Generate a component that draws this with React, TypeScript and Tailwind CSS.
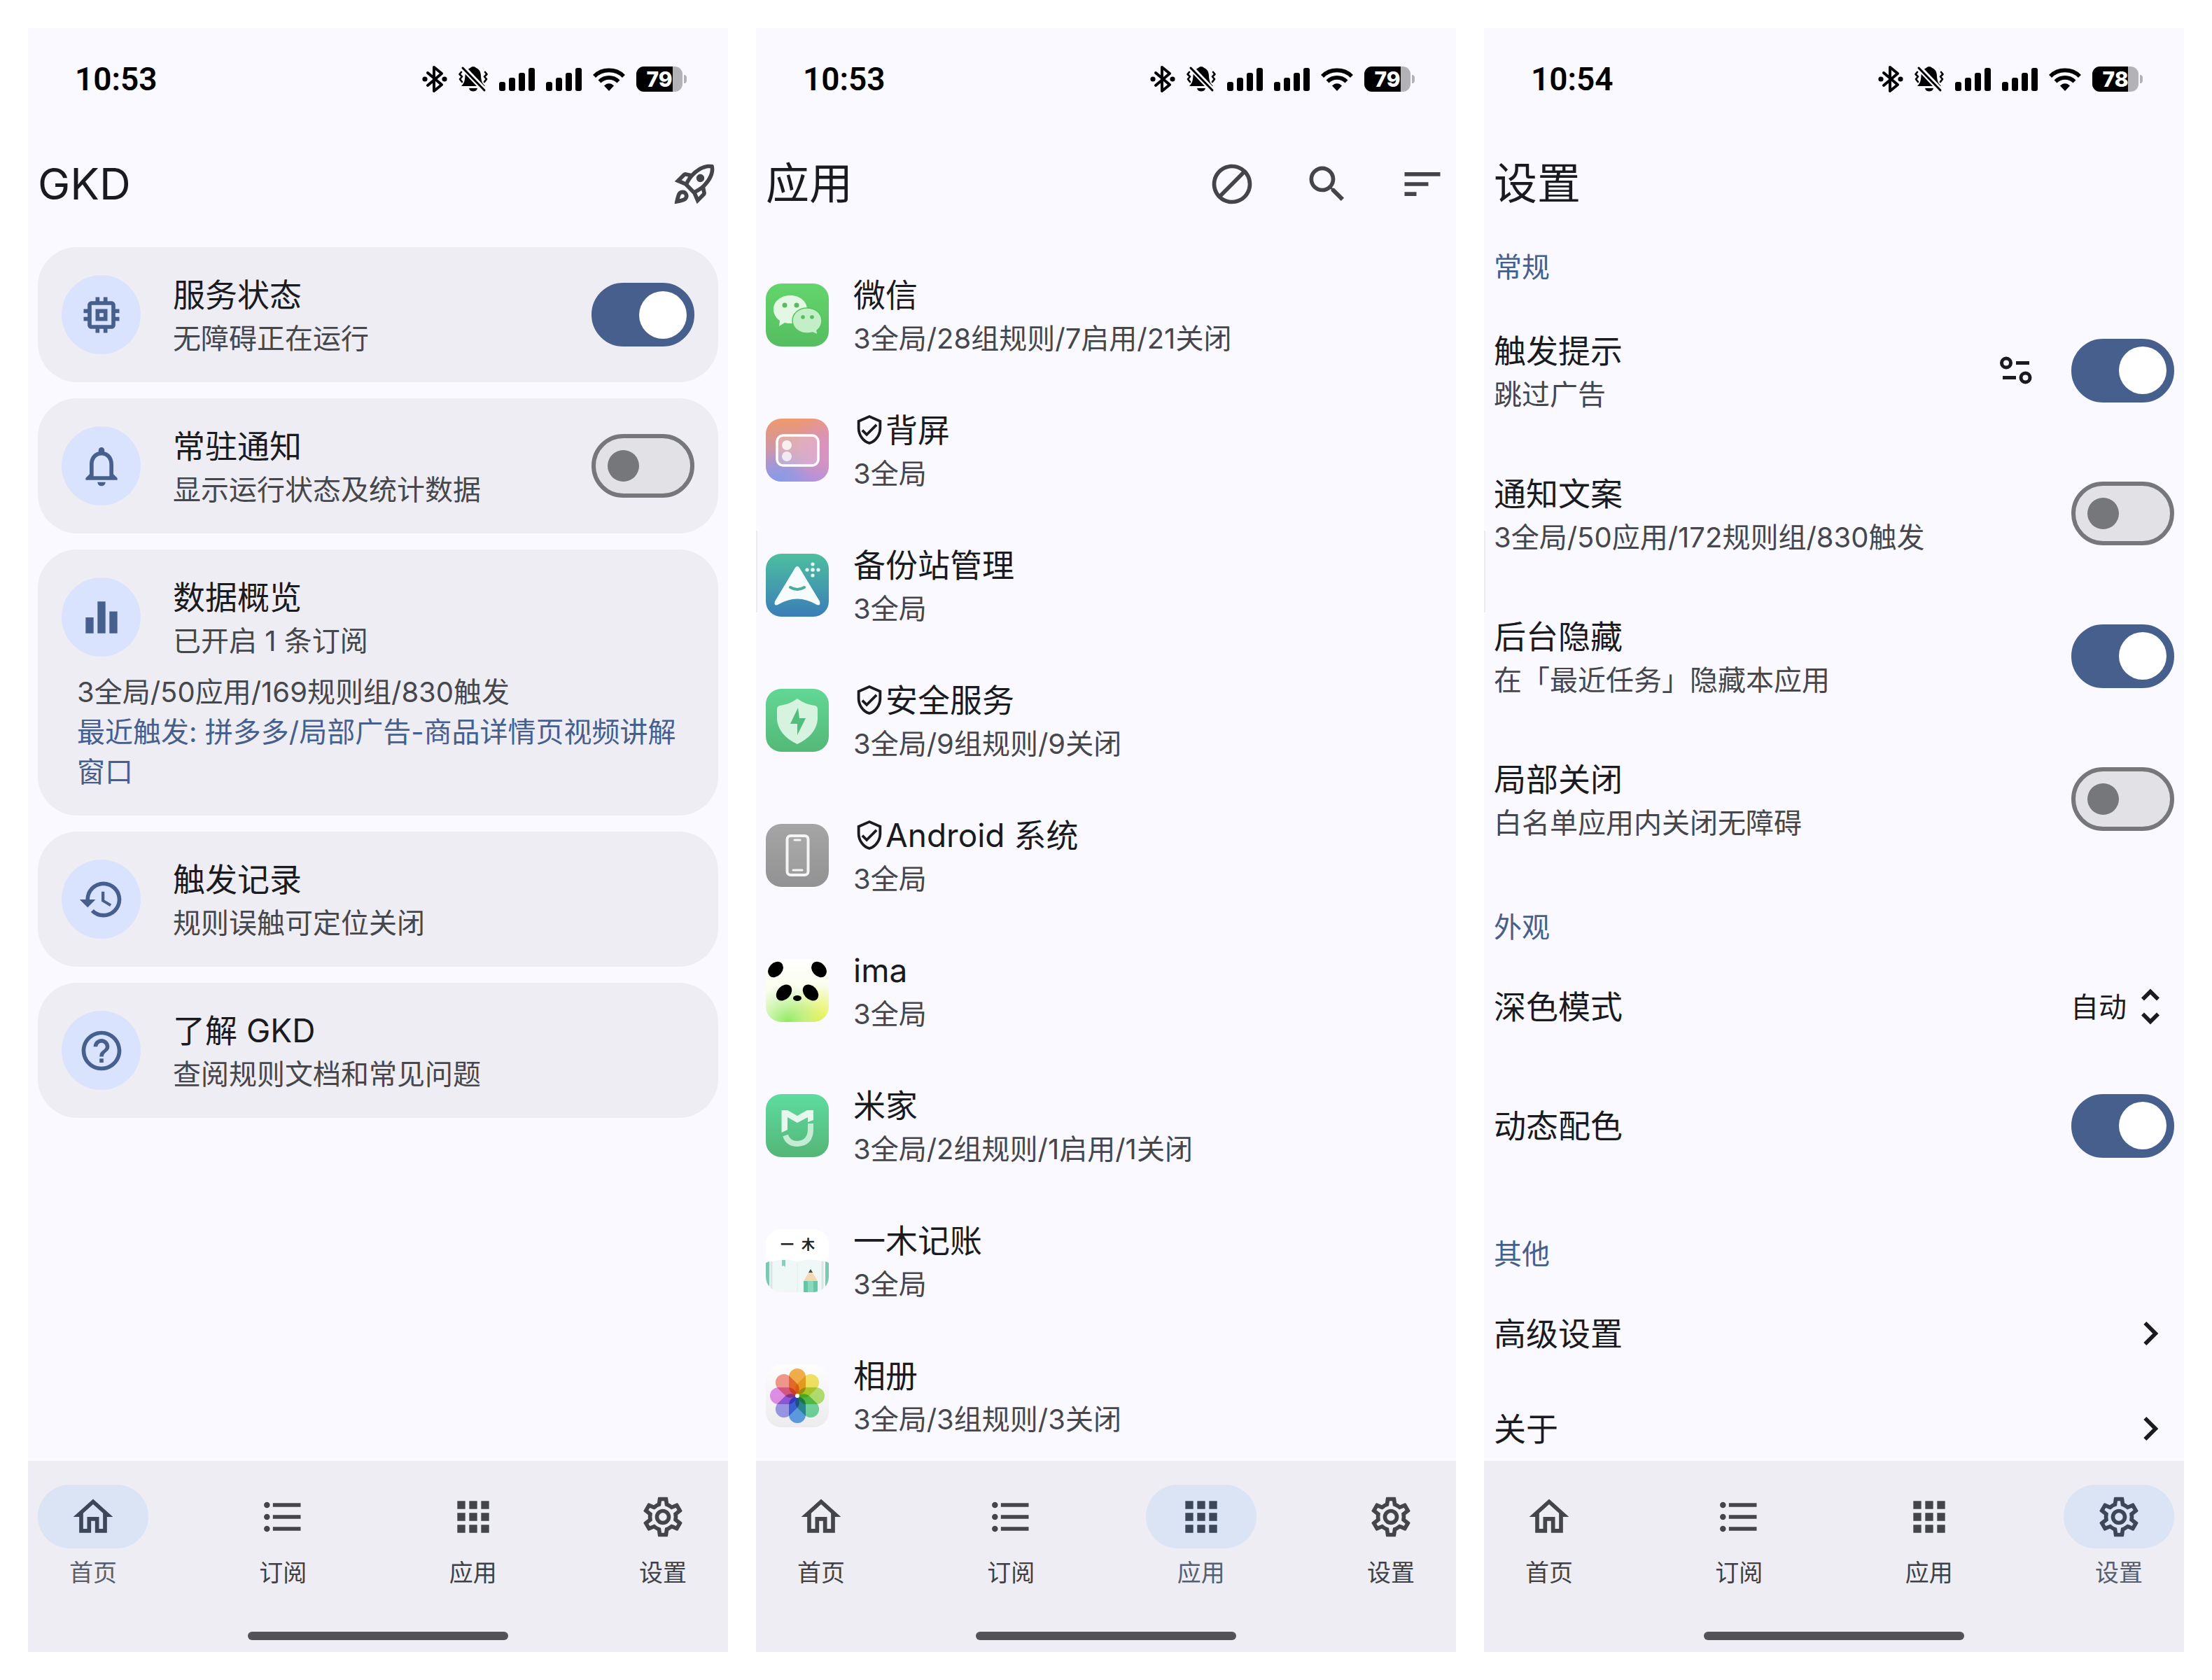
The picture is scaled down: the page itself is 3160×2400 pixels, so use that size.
import { useId } from 'react';
import type { ComponentType, ReactNode } from 'react';
import {
  MdApps,
  MdBlock,
  MdEqualizer,
  MdFormatListBulleted,
  MdHelpOutline,
  MdHistory,
  MdKeyboardArrowRight,
  MdMemory,
  MdNotificationsNone,
  MdOutlineHome,
  MdOutlineRocketLaunch,
  MdOutlineSettings,
  MdOutlineVerifiedUser,
  MdSearch,
  MdSort,
  MdUnfoldMore,
} from 'react-icons/md';

// ─── Types ────────────────────────────────────────────────────────────────────

type IconType = ComponentType<{ className?: string }>;
type TabKey = 'home' | 'subs' | 'apps' | 'settings';

interface AppItem {
  name: string;
  desc: string;
  system?: boolean;
  Icon: ComponentType;
}

// ─── Status bar ───────────────────────────────────────────────────────────────

function BluetoothIcon() {
  return (
    <svg viewBox="0 0 36 40" className="h-10 w-9" fill="none" stroke="currentColor" strokeWidth="4" strokeLinejoin="round" strokeLinecap="round" aria-hidden>
      <path d="M8 11 L28 28 L17 37 V3 L28 12 L8 29" />
      <circle cx="4" cy="20" r="3.600" fill="currentColor" stroke="none" />
      <circle cx="32" cy="20" r="3.600" fill="currentColor" stroke="none" />
    </svg>
  );
}

function SilentIcon() {
  return (
    <svg viewBox="0 0 42 38" className="h-[38px] w-[42px]" fill="none" stroke="currentColor" strokeWidth="2.600" strokeLinecap="round" strokeLinejoin="round" aria-hidden>
      <path d="M4 29 C8 25 9 22 9.500 14 C10 7 14 4 17 3 C18 0.500 24 0.500 25 3 C30 5 32 9 32 15 C32.500 22 34 25 38 29 Z" fill="currentColor" stroke="none" />
      <path d="M15 32 H27 C26 38 16 38 15 32 Z" fill="currentColor" stroke="none" />
      <path d="M3 -1 L39 37" stroke="#faf9ff" strokeWidth="8" />
      <path d="M6 3 L37 35" strokeWidth="3" />
      <path d="M4 9 L1.500 12 L5 15.500 L2 19 L5 23 M38 9 L40.500 12 L37 15.500 L40 19 L37 23" />
    </svg>
  );
}

function SignalIcon() {
  return (
    <svg viewBox="0 0 51 33" className="h-[33px] w-[51px]" fill="currentColor" aria-hidden>
      <rect x="0" y="20" width="9" height="13" rx="3" />
      <rect x="14" y="14" width="9" height="19" rx="3" />
      <rect x="28" y="7" width="9" height="26" rx="3" />
      <rect x="42" y="0" width="9" height="33" rx="3" />
    </svg>
  );
}

function WifiIcon() {
  return (
    <svg viewBox="0 0 46 33" className="h-[33px] w-[46px]" fill="none" stroke="currentColor" strokeWidth="5.600" aria-hidden>
      <path d="M2 12 C13 0.500 33 0.500 44 12" />
      <path d="M9.500 19.500 C17 12 29 12 36.500 19.500" />
      <path d="M16 25.500 C20 21 26 21 30 25.500 L23 33 Z" fill="currentColor" stroke="none" />
    </svg>
  );
}

function Battery({ level }: { level: number }) {
  return (
    <div className="flex items-center gap-[2px]">
      <div className="relative flex h-9 w-[66px] items-center justify-center overflow-hidden rounded-[11px] bg-[#b3b3b7]">
        <span className="absolute inset-y-0 left-0 bg-black" style={{ width: `${level}%` }} />
        <span className="relative text-[30px] leading-9 font-extrabold text-white">{level}</span>
      </div>
      <span className="h-3 w-1 rounded-r-full bg-[#b3b3b7]" />
    </div>
  );
}

function StatusBar({ time, battery }: { time: string; battery: number }) {
  return (
    <div className="flex h-[146px] shrink-0 items-center justify-between pr-[59px] pl-[67px] text-black">
      <span className="font-['Roboto',sans-serif] text-[46px] leading-[68px] font-semibold">{time}</span>
      <div className="flex items-center gap-4">
        <BluetoothIcon />
        <SilentIcon />
        <SignalIcon />
        <SignalIcon />
        <WifiIcon />
        <Battery level={battery} />
      </div>
    </div>
  );
}

// ─── Shared pieces ────────────────────────────────────────────────────────────

function Switch({ id, on }: { id: string; on?: boolean }) {
  return (
    <input
      id={id}
      type="checkbox"
      role="switch"
      defaultChecked={on}
      className="flex h-[91px] w-[147px] shrink-0 cursor-pointer appearance-none items-center rounded-full border-[6px] border-[#76777b] bg-[#e2e2e6] px-[17px] before:size-[45px] before:rounded-full before:bg-[#76777b] checked:justify-end checked:border-[#465f8d] checked:bg-[#465f8d] checked:px-[5px] checked:before:size-[68px] checked:before:bg-white"
    />
  );
}

function IconButton({ label, Icon }: { label: string; Icon: IconType }) {
  return (
    <button type="button" aria-label={label} className="text-[#444549]">
      <Icon className="size-[68px]" />
    </button>
  );
}

const TABS: { key: TabKey; label: string; Icon: IconType }[] = [
  { key: 'home', label: '首页', Icon: MdOutlineHome },
  { key: 'subs', label: '订阅', Icon: MdFormatListBulleted },
  { key: 'apps', label: '应用', Icon: MdApps },
  { key: 'settings', label: '设置', Icon: MdOutlineSettings },
];

function BottomNav({ active }: { active: TabKey }) {
  return (
    <nav className="flex h-[273px] shrink-0 flex-col items-center justify-between bg-[#eeedf3] px-[14px] pt-[34px] pb-[17px]">
      <div className="flex w-full justify-between">
        {TABS.map(({ key, label, Icon }) => {
          const selected = key === active;
          return (
            <a
              key={key}
              href={`#${key}`}
              aria-current={selected ? 'page' : undefined}
              className="flex w-[158px] flex-col items-center gap-3"
            >
              <span
                className={`flex h-[91px] w-full items-center justify-center rounded-full ${
                  selected ? 'bg-[#dae4f5] text-[#3d475a]' : 'text-[#444549]'
                }`}
              >
                <Icon className="size-[68px]" />
              </span>
              <span className={`text-[34px] leading-[46px] ${selected ? 'text-[#565e6e]' : 'text-[#3f4045]'}`}>
                {label}
              </span>
            </a>
          );
        })}
      </div>
      <span className="h-3 w-[372px] rounded-full bg-[#535257]" />
    </nav>
  );
}

interface PhoneProps {
  time: string;
  battery: number;
  title: string;
  tab: TabKey;
  actions?: ReactNode;
  edgeHandle?: boolean;
  children: ReactNode;
}

function Phone({ time, battery, title, tab, actions, edgeHandle, children }: PhoneProps) {
  return (
    <section className="relative flex min-w-0 flex-1 flex-col overflow-hidden bg-[#faf9ff]">
      <StatusBar time={time} battery={battery} />
      <header className="flex h-[154px] shrink-0 items-center justify-between px-[14px]">
        <h1 className="text-[62px] leading-[68px]">{title}</h1>
        <div className="flex gap-[68px]">{actions}</div>
      </header>
      <main className="min-h-0 flex-1 overflow-hidden px-[14px] pt-[13px]">{children}</main>
      <BottomNav active={tab} />
      {edgeHandle && <span className="absolute top-[718px] left-0 h-[117px] w-[2px] bg-[#ebebf0]" />}
    </section>
  );
}

// ─── Home ─────────────────────────────────────────────────────────────────────

interface CardProps {
  Icon: IconType;
  title: string;
  desc: string;
  on?: boolean;
  children?: ReactNode;
}

function Card({ Icon, title, desc, on, children }: CardProps) {
  const id = useId();
  return (
    <article className="rounded-[56px] bg-[#eeedf3] py-[34px]">
      <div className="flex items-center px-[34px]">
        <span className="mr-[46px] flex size-[113px] shrink-0 items-center justify-center rounded-full bg-[#d9e3fd] text-[#465f8d]">
          <Icon className="size-[68px]" />
        </span>
        <div className="min-w-0 flex-1">
          {on === undefined ? (
            <h2 className="text-[46px] leading-[68px]">{title}</h2>
          ) : (
            <label htmlFor={id} className="block text-[46px] leading-[68px]">
              {title}
            </label>
          )}
          <p className="text-[40px] leading-[57px] text-[#46474c]">{desc}</p>
        </div>
        {on !== undefined && <Switch id={id} on={on} />}
      </div>
      {children}
    </article>
  );
}

function HomeScreen() {
  return (
    <Phone
      time="10:53"
      battery={79}
      title="GKD"
      tab="home"
      actions={<IconButton label="启动" Icon={MdOutlineRocketLaunch} />}
    >
      <div className="flex flex-col gap-[23px]">
        <Card Icon={MdMemory} title="服务状态" desc="无障碍正在运行" on />
        <Card Icon={MdNotificationsNone} title="常驻通知" desc="显示运行状态及统计数据" on={false} />
        <Card Icon={MdEqualizer} title="数据概览" desc="已开启 1 条订阅">
          <div className="mt-4 px-14 text-[40px] leading-[57px]">
            <p className="text-[#46474c]">3全局/50应用/169规则组/830触发</p>
            <p className="text-[#465f8d]">最近触发: 拼多多/局部广告-商品详情页视频讲解窗口</p>
          </div>
        </Card>
        <Card Icon={MdHistory} title="触发记录" desc="规则误触可定位关闭" />
        <Card Icon={MdHelpOutline} title="了解 GKD" desc="查阅规则文档和常见问题" />
      </div>
    </Phone>
  );
}

// ─── App icons ────────────────────────────────────────────────────────────────

function IconTile({ from, to, children }: { from: string; to: string; children: ReactNode }) {
  const id = useId();
  return (
    <svg viewBox="0 0 90 90" className="size-[90px] shrink-0" aria-hidden>
      <defs>
        <linearGradient id={`${id}g`} x1="0" y1="0" x2="0" y2="1">
          <stop offset="0" stopColor={from} />
          <stop offset="1" stopColor={to} />
        </linearGradient>
        <clipPath id={`${id}c`}>
          <rect width="90" height="90" rx="22" />
        </clipPath>
      </defs>
      <g clipPath={`url(#${id}c)`}>
        <rect width="90" height="90" fill={`url(#${id}g)`} />
        {children}
      </g>
    </svg>
  );
}

function WechatIcon() {
  return (
    <IconTile from="#63d56c" to="#55bd60">
      <path d="M35 17 C49 17 59 26 59 37 C59 48 49 57 35 57 C32 57 29 56.500 27 56 L19 61 L20 53 C14 49 11 43 11 37 C11 26 21 17 35 17 Z" fill="#e2f8e3" />
      <circle cx="27" cy="31" r="3.500" fill="#5bb863" />
      <circle cx="44" cy="31" r="3.500" fill="#5bb863" />
      <path d="M59 35 C71 35 80 43 80 53 C80 59 77 64 73 67 L74 73 L67 70 C64 71 62 71 59 71 C47 71 38 63 38 53 C38 43 47 35 59 35 Z" fill="#c2efc5" stroke="#58c263" strokeWidth="1.500" />
      <circle cx="53" cy="48" r="2.800" fill="#5bb863" />
      <circle cx="66" cy="48" r="2.800" fill="#5bb863" />
    </IconTile>
  );
}

function RearScreenIcon() {
  return (
    <IconTile from="#f0996c" to="#a892e6">
      <defs>
        <radialGradient id="rear-pink" cx="1" cy="0.5" r="0.65">
          <stop offset="0" stopColor="#dc92c4" />
          <stop offset="1" stopColor="#dc92c4" stopOpacity="0" />
        </radialGradient>
        <radialGradient id="rear-blue" cx="0.2" cy="1" r="0.5">
          <stop offset="0" stopColor="#869ce6" />
          <stop offset="1" stopColor="#869ce6" stopOpacity="0" />
        </radialGradient>
      </defs>
      <rect width="90" height="90" fill="url(#rear-pink)" />
      <rect width="90" height="90" fill="url(#rear-blue)" />
      <rect x="16" y="24" width="59" height="43" rx="9" fill="#fff" fillOpacity="0.22" stroke="#fff" strokeWidth="3.500" />
      <circle cx="30" cy="38" r="7" fill="#fff" fillOpacity="0.8" />
      <circle cx="30" cy="54" r="7" fill="#fff" fillOpacity="0.75" />
    </IconTile>
  );
}

function BackupIcon() {
  return (
    <IconTile from="#4dbf9f" to="#3b7db8">
      <path d="M42 20 Q45 16 48 20 L77 68 Q79 75 73 73 Q45 56 17 73 Q11 75 13 68 Z" fill="#f6fcfb" />
      <path d="M35 48 Q45 54 55 48" fill="none" stroke="#4aab9f" strokeWidth="4" strokeLinecap="round" />
      <g fill="#e3f6f2">
        <circle cx="67" cy="23" r="2.800" />
        <circle cx="59" cy="23" r="2.600" />
        <circle cx="75" cy="23" r="2.600" />
        <circle cx="67" cy="15" r="2.600" />
        <circle cx="67" cy="31" r="2.600" />
      </g>
    </IconTile>
  );
}

function SecurityIcon() {
  return (
    <IconTile from="#62d795" to="#54b878">
      <path d="M45 14 C53 20 62 23 70 24 Q74 25 74 29 V42 C74 58 61 72 45 79 C29 72 16 58 16 42 V29 Q16 25 20 24 C28 23 37 20 45 14 Z" fill="#d5f3df" />
      <path d="M46 27 L35 50 H45 L45 66 L57 42 H48 Z" fill="#52bd7c" />
    </IconTile>
  );
}

function AndroidSystemIcon() {
  return (
    <IconTile from="#a5a5a5" to="#929294">
      <rect x="30.500" y="17" width="30" height="56" rx="5" fill="#fff" fillOpacity="0.08" stroke="#f4f4f4" strokeWidth="4" />
      <path d="M41 23 H49 M39 66 H52" stroke="#f4f4f4" strokeWidth="3" strokeLinecap="round" />
    </IconTile>
  );
}

function ImaIcon() {
  return (
    <IconTile from="#ffffff" to="#f3fbd8">
      <defs>
        <radialGradient id="ima-yellow" cx="0.85" cy="1" r="0.6">
          <stop offset="0" stopColor="#e8f04a" />
          <stop offset="1" stopColor="#e8f04a" stopOpacity="0" />
        </radialGradient>
        <radialGradient id="ima-green" cx="0.35" cy="1" r="0.6">
          <stop offset="0" stopColor="#8eea5c" />
          <stop offset="1" stopColor="#b4f09a" stopOpacity="0" />
        </radialGradient>
      </defs>
      <rect width="90" height="90" fill="url(#ima-yellow)" />
      <rect width="90" height="90" fill="url(#ima-green)" />
      <ellipse cx="14" cy="15" rx="12.500" ry="9.500" transform="rotate(-48 14 15)" />
      <ellipse cx="76" cy="15" rx="12.500" ry="9.500" transform="rotate(48 76 15)" />
      <ellipse cx="26" cy="48" rx="13" ry="9.500" transform="rotate(-48 26 48)" />
      <ellipse cx="64" cy="48" rx="13" ry="9.500" transform="rotate(48 64 48)" />
      <ellipse cx="45" cy="56" rx="6" ry="4" />
    </IconTile>
  );
}

function MiHomeIcon() {
  return (
    <IconTile from="#5edc9f" to="#54b577">
      <path d="M22.500 23 H31 L45 31 L59 23 H68 V37 L60 40 V33 L45 41 L31 33 V51 L22.500 55 Z" fill="#e6f8ee" />
      <path d="M28 59 Q32 71 45 71 Q64 70 64 50 V42" fill="none" stroke="#c3ecd3" strokeWidth="8" />
    </IconTile>
  );
}

function LedgerIcon() {
  return (
    <IconTile from="#ffffff" to="#ffffff">
      <path d="M0 48 Q4 44 10 46 Q30 40 45 47 Q60 40 80 46 Q86 44 90 48 V90 H0 Z" fill="#f0f8f7" />
      <path d="M0 48 L5 46 V90 H0 Z M90 48 L85 46 V90 H90 Z" fill="#7cc9b1" />
      <path d="M8 46 V90 M81 46 V90" stroke="#d9e6e5" strokeWidth="3" />
      <path d="M45 47 V90" stroke="#e0ecea" strokeWidth="1" />
      <path d="M23 44 H28 V54 L25.500 52 L23 53 Z" fill="#7fd3b8" />
      <path d="M64 57 L74 74 H54 Z" fill="#f3d9b1" />
      <path d="M64 57 L67 62 H61 Z" fill="#4a4a4a" />
      <rect x="54" y="74" width="20" height="16" fill="#66c6a6" />
      <rect x="60" y="74" width="8" height="16" fill="#8ad9bf" />
      <text x="21" y="29" fontSize="19" fontWeight="700" fill="#222" className="font-['Noto_Sans_CJK_SC',sans-serif]">一</text>
      <text x="51" y="29" fontSize="19" fontWeight="700" fill="#222" className="font-['Noto_Sans_CJK_SC',sans-serif]">木</text>
    </IconTile>
  );
}

const PETALS = ['#f2a32c', '#f2e146', '#a9de58', '#5cd48e', '#4593e6', '#918ceb', '#e37fea', '#f28a78'];

function GalleryIcon() {
  return (
    <IconTile from="#fdfdfe" to="#ececee">
      {PETALS.map((color, i) => (
        <rect
          key={color}
          x="33"
          y="6"
          width="24"
          height="38"
          rx="12"
          fill={color}
          fillOpacity="0.85"
          transform={`rotate(${i * 45} 45 45)`}
          className="mix-blend-multiply"
        />
      ))}
      <circle cx="45" cy="45" r="3" fill="#fff" />
    </IconTile>
  );
}

// ─── Apps ─────────────────────────────────────────────────────────────────────

const APPS: AppItem[] = [
  { name: '微信', desc: '3全局/28组规则/7启用/21关闭', Icon: WechatIcon },
  { name: '背屏', desc: '3全局', system: true, Icon: RearScreenIcon },
  { name: '备份站管理', desc: '3全局', Icon: BackupIcon },
  { name: '安全服务', desc: '3全局/9组规则/9关闭', system: true, Icon: SecurityIcon },
  { name: 'Android 系统', desc: '3全局', system: true, Icon: AndroidSystemIcon },
  { name: 'ima', desc: '3全局', Icon: ImaIcon },
  { name: '米家', desc: '3全局/2组规则/1启用/1关闭', Icon: MiHomeIcon },
  { name: '一木记账', desc: '3全局', Icon: LedgerIcon },
  { name: '相册', desc: '3全局/3组规则/3关闭', Icon: GalleryIcon },
];

function AppsScreen() {
  return (
    <Phone
      time="10:53"
      battery={79}
      title="应用"
      tab="apps"
      edgeHandle
      actions={
        <>
          <IconButton label="白名单" Icon={MdBlock} />
          <IconButton label="搜索" Icon={MdSearch} />
          <IconButton label="排序" Icon={MdSort} />
        </>
      }
    >
      <ul>
        {APPS.map(({ name, desc, system, Icon }) => (
          <li key={name}>
            <a href="#app" className="flex items-center gap-[35px] py-[34px]">
              <Icon />
              <div>
                <p className="flex items-center text-[46px] leading-[68px]">
                  {system && <MdOutlineVerifiedUser className="size-[46px]" />}
                  {name}
                </p>
                <p className="text-[40px] leading-[57px] text-[#46474c]">{desc}</p>
              </div>
            </a>
          </li>
        ))}
      </ul>
    </Phone>
  );
}

// ─── Settings ─────────────────────────────────────────────────────────────────

function TuneIcon() {
  return (
    <svg viewBox="0 0 46 40" className="h-10 w-[46px]" fill="none" stroke="currentColor" strokeWidth="5" aria-hidden>
      <circle cx="9" cy="9.500" r="6.500" />
      <path d="M23 9.500 H42 M4 30.500 H23" />
      <circle cx="36.500" cy="30.500" r="6.500" />
    </svg>
  );
}

function SettingSwitch({ title, desc, on, extra }: { title: string; desc?: string; on?: boolean; extra?: ReactNode }) {
  const id = useId();
  return (
    <div className="flex min-h-[204px] items-center gap-14 py-[34px]">
      <div className="flex-1">
        <label htmlFor={id} className="block text-[46px] leading-[68px]">
          {title}
        </label>
        {desc && <p className="text-[40px] leading-[57px] text-[#46474c]">{desc}</p>}
      </div>
      {extra}
      <Switch id={id} on={on} />
    </div>
  );
}

function SettingLink({ title }: { title: string }) {
  return (
    <a href="#detail" className="flex items-center justify-between py-[34px] text-[46px] leading-[68px]">
      {title}
      <MdKeyboardArrowRight className="size-[68px]" />
    </a>
  );
}

function SettingGroup({ title, children }: { title: string; children: ReactNode }) {
  return (
    <section>
      <h2 className="mb-[17px] text-[40px] leading-[57px] text-[#465f8d]">{title}</h2>
      {children}
    </section>
  );
}

function SettingsScreen() {
  return (
    <Phone time="10:54" battery={78} title="设置" tab="settings" edgeHandle>
      <div className="flex flex-col gap-[53px]">
        <SettingGroup title="常规">
          <SettingSwitch
            title="触发提示"
            desc="跳过广告"
            on
            extra={
              <button type="button" aria-label="提示设置">
                <TuneIcon />
              </button>
            }
          />
          <SettingSwitch title="通知文案" desc="3全局/50应用/172规则组/830触发" />
          <SettingSwitch title="后台隐藏" desc="在「最近任务」隐藏本应用" on />
          <SettingSwitch title="局部关闭" desc="白名单应用内关闭无障碍" />
        </SettingGroup>

        <SettingGroup title="外观">
          <div className="flex items-center justify-between py-[34px]">
            <label htmlFor="theme" className="text-[46px] leading-[68px]">
              深色模式
            </label>
            <div className="flex items-center">
              <select id="theme" className="appearance-none bg-transparent text-[40px] leading-[57px]">
                <option>自动</option>
                <option>启用</option>
                <option>关闭</option>
              </select>
              <MdUnfoldMore className="size-[68px]" />
            </div>
          </div>
          <SettingSwitch title="动态配色" on />
        </SettingGroup>

        <SettingGroup title="其他">
          <SettingLink title="高级设置" />
          <SettingLink title="关于" />
        </SettingGroup>
      </div>
    </Phone>
  );
}

export default function App() {
  return (
    <div
      lang="zh-CN"
      className="flex h-screen gap-10 bg-white p-10 font-['Inter','Noto_Sans_CJK_SC',sans-serif] text-[#1a1b1f]"
    >
      <HomeScreen />
      <AppsScreen />
      <SettingsScreen />
    </div>
  );
}
